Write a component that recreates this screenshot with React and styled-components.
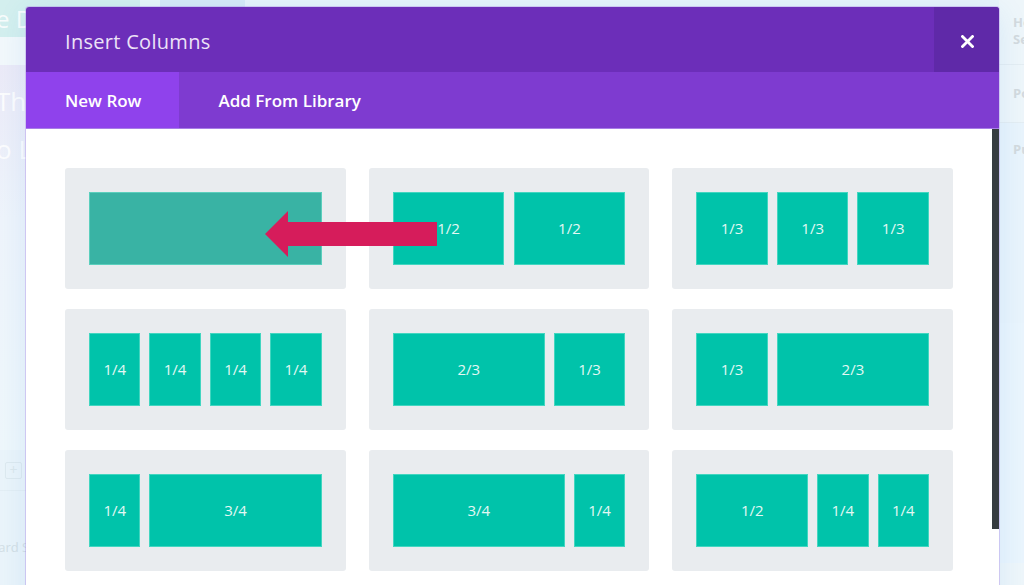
import React from "react";
import styled, { createGlobalStyle } from "styled-components";

const GlobalStyle = createGlobalStyle`
  html, body {
    margin: 0;
    padding: 0;
    height: 100%;
    overflow: hidden;
  }
  body {
    font-family: "Open Sans", "Liberation Sans", sans-serif;
    background: #eaf4fa;
  }
  #root { height: 100%; }
`;

/* ---------- page behind the dialog ---------- */

const Page = styled.div`
  position: relative;
  display: flex;
  height: 100vh;
  overflow: hidden;
  background: #eaf4fa;
`;

const MainColumn = styled.div`
  flex: 1;
  display: flex;
  flex-direction: column;
  min-width: 0;
`;

const HeroStrip = styled.div`
  display: flex;
  height: 37px;
`;

const HeroTile = styled.div`
  width: ${(p) => p.$w || "auto"};
  flex: ${(p) => (p.$w ? "none" : 1)};
  height: ${(p) => p.$h || "100%"};
  background: ${(p) => p.$bg};
`;

/* faded labels of the page, clipped at the dialog's edge */
const Ghost = styled.div`
  width: 26px;
  overflow: hidden;
  white-space: nowrap;
  font-size: ${(p) => p.$size || "24px"};
  line-height: ${(p) => p.$lh || "37px"};
  color: ${(p) => p.$color || "rgba(255, 255, 255, 0.85)"};
  text-indent: ${(p) => p.$indent || "-4px"};
`;

const Band = styled.div`
  height: 28px;
  background: #f2f8fb;
`;

const FadedPanel = styled.div`
  height: 385px;
  width: 300px;
  background: linear-gradient(180deg, #ebeaf7 0%, #eef4fb 40%, #eef7fb 100%);
  padding-top: 12px;
  box-sizing: border-box;
`;

const FadedTool = styled.div`
  display: flex;
  align-items: center;
  height: 40px;
  padding-left: 5px;
  border-bottom: 1px solid #e3eef4;
  width: 300px;
`;

const PlusBox = styled.div`
  width: 15px;
  height: 15px;
  border: 1px solid #dde9ef;
  border-radius: 2px;
  display: grid;
  place-items: center;
  color: #dbe7ec;
  font-size: 14px;
  line-height: 1;
`;

const FadedCaption = styled.div`
  padding-top: 47px;
`;

const SideColumn = styled.div`
  width: 25px;
  flex: none;
  background: #eef6fa;
  overflow: hidden;
  display: flex;
  flex-direction: column;
`;

const SideBlock = styled.div`
  padding: ${(p) => p.$pad || "14px 0 0 14px"};
  height: ${(p) => p.$h};
  box-sizing: border-box;
  border-bottom: ${(p) => (p.$line ? "1px solid #e4edf2" : "none")};
  font-size: 13px;
  font-weight: 700;
  line-height: 17px;
  color: #d3dade;
  white-space: nowrap;
  background: ${(p) => p.$bg || "transparent"};
`;

/* ---------- dialog ---------- */

const Modal = styled.div`
  position: absolute;
  top: 7px;
  left: 26px;
  width: 973px;
  height: 620px;
  display: flex;
  flex-direction: column;
  background: #fff;
  border-radius: 3px 3px 0 0;
  overflow: hidden;
  box-shadow: 0 0 0 1px rgba(170, 130, 230, 0.35), 0 5px 30px rgba(43, 135, 218, 0.12);
`;

const Header = styled.div`
  display: flex;
  height: 65px;
  background: #6c2eb9;
`;

const Title = styled.h1`
  flex: 1;
  margin: 0;
  padding: 4px 0 0 39px;
  display: flex;
  align-items: center;
  font-size: 20px;
  font-weight: 400;
  color: #ece3f7;
  letter-spacing: 0.3px;
`;

const CloseButton = styled.button`
  width: 65px;
  height: 65px;
  border: 0;
  padding: 3px 0 0 1px;
  background: #5f29a8;
  display: grid;
  place-items: center;
  cursor: pointer;
`;

const Tabs = styled.div`
  display: flex;
  height: 56px;
  background: #7e3bd0;
  border-bottom: 1px solid #a77ee6;
`;

const Tab = styled.div`
  display: flex;
  align-items: center;
  padding: 1px 38px 0 39px;
  font-size: 17px;
  font-weight: 600;
  color: #fff;
  background: ${(p) => (p.$active ? "#8f42ec" : "transparent")};
`;

const Body = styled.div`
  position: relative;
  flex: 1;
  display: flex;
`;

const Scroller = styled.div`
  flex: 1;
  padding: 39px 39px;
`;

const ScrollBar = styled.div`
  width: 7px;
  height: 400px;
  background: #363c40;
`;

const LayoutGrid = styled.div`
  display: grid;
  grid-template-columns: repeat(3, 1fr);
  column-gap: 23px;
  row-gap: 20px;
`;

const LayoutCard = styled.div`
  height: 121px;
  box-sizing: border-box;
  padding: 24px;
  background: #e9ecef;
  border-radius: 3px;
  display: flex;
  justify-content: space-between;
`;

const Col = styled.div`
  box-sizing: border-box;
  height: 73px;
  border: 1px solid rgba(120, 230, 210, 0.55);
  background: ${(p) => (p.$hover ? "#39b3a4" : "#00c3aa")};
  display: grid;
  place-items: center;
  padding-bottom: 1px;
  font-size: 15px;
  color: #e3f8f4;
`;

const Pointer = styled.svg`
  position: absolute;
  left: 239px;
  top: 82px;
`;

const layouts = [
  [["1", ""]],
  [["1/2"], ["1/2"]],
  [["1/3"], ["1/3"], ["1/3"]],
  [["1/4"], ["1/4"], ["1/4"], ["1/4"]],
  [["2/3"], ["1/3"]],
  [["1/3"], ["2/3"]],
  [["1/4"], ["3/4"]],
  [["3/4"], ["1/4"]],
  [["1/2"], ["1/4"], ["1/4"]],
];

const fraction = (s) => {
  const [a, b] = s.split("/").map(Number);
  return b ? a / b : a;
};

export default function App() {
  return (
    <>
      <GlobalStyle />
      <Page>
        <MainColumn>
          <HeroStrip>
            <HeroTile $w="140px" $bg="#d3efee">
              <Ghost>e Demo</Ghost>
            </HeroTile>
            <HeroTile $w="20px" $bg="#e9f6f8" />
            <HeroTile $w="85px" $h="7px" $bg="#d6eaf6" />
            <HeroTile $bg="#e7f3fa" $h="7px" />
          </HeroStrip>
          <Band />
          <FadedPanel>
            <Ghost $size="26px" $lh="48px">The Divi</Ghost>
            <Ghost $size="26px" $lh="48px">o Lorem</Ghost>
          </FadedPanel>
          <FadedTool>
            <PlusBox>+</PlusBox>
          </FadedTool>
          <FadedCaption>
            <Ghost $size="13px" $lh="18px" $color="#d3dfe5" $indent="-18px">
              Board Settings
            </Ghost>
          </FadedCaption>
        </MainColumn>
        <SideColumn>
          <SideBlock $h="65px" $line>
            Hero
            <br />
            Section
          </SideBlock>
          <SideBlock $h="58px" $pad="20px 0 0 14px" $line>
            Post
          </SideBlock>
          <SideBlock $h="200px" $pad="18px 0 0 14px" $bg="#e9f4fc">
            Publish
          </SideBlock>
          <SideBlock $h="240px" $bg="#eaf5fd" />
        </SideColumn>

        <Modal>
          <Header>
            <Title>Insert Columns</Title>
            <CloseButton aria-label="Close">
              <svg width="13" height="13" viewBox="0 0 13 13">
                <path
                  d="M1.5 1.5 L11.5 11.5 M11.5 1.5 L1.5 11.5"
                  stroke="#fff"
                  strokeWidth="2.8"
                  strokeLinecap="square"
                />
              </svg>
            </CloseButton>
          </Header>
          <Tabs>
            <Tab $active>New Row</Tab>
            <Tab>Add From Library</Tab>
          </Tabs>
          <Body>
            <Scroller>
              <LayoutGrid>
                {layouts.map((cols, i) => (
                  <LayoutCard key={i}>
                    {cols.map(([label, shown], j) => {
                      const f = fraction(label);
                      return (
                        <Col
                          key={j}
                          $hover={i === 0}
                          style={{ width: `calc(${f} * (100% + 9px) - 9px)` }}
                        >
                          {shown === undefined ? label : shown}
                        </Col>
                      );
                    })}
                  </LayoutCard>
                ))}
              </LayoutGrid>
            </Scroller>
            <ScrollBar />
            <Pointer width="172" height="46" viewBox="0 0 172 46">
              <polygon
                points="0,23 23,0 23,11 172,11 172,35 23,35 23,46"
                fill="#d61c5b"
              />
            </Pointer>
          </Body>
        </Modal>
      </Page>
    </>
  );
}
